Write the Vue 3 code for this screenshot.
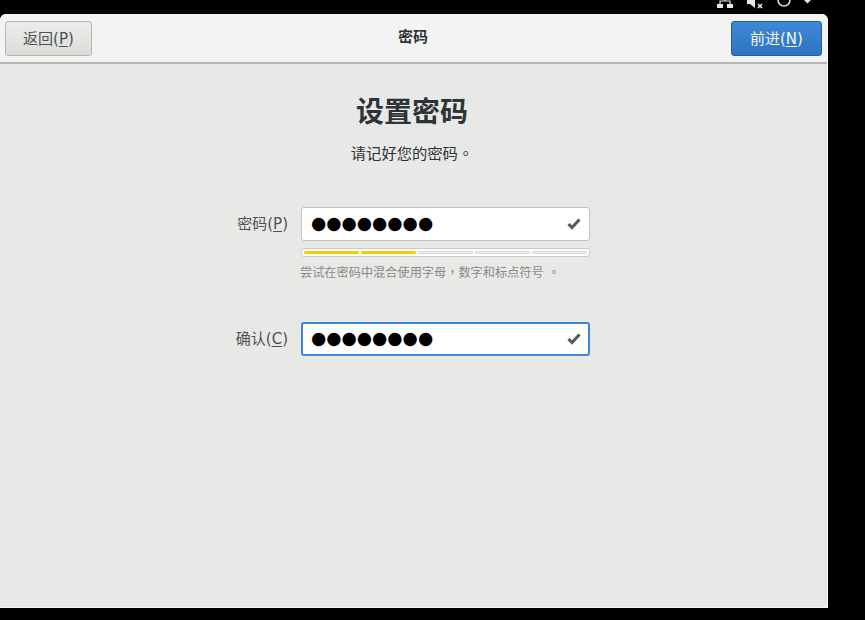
<script setup>
const segments = [
  { on: true }, { on: true }, { on: false }, { on: false }, { on: false }
]
const dots = '●●●●●●●●'
</script>

<template>
  <div class="screen">
    <div class="tray">
      <svg class="ti net" width="18" height="14" viewBox="0 0 18 14"><path d="M1 4h6v4H1zM11 4h6v4h-6z" fill="#e8e8e8"/><path d="M4 4V1h10v3M9 1v-2" fill="none" stroke="#e8e8e8" stroke-width="1.2"/></svg>
      <svg class="ti vol" width="18" height="14" viewBox="0 0 18 14"><path d="M0 -2h3l5-4v14l-5-4H0z" fill="#e8e8e8"/><path d="M11 4l4 4M15 4l-4 4" stroke="#e8e8e8" stroke-width="1.6"/></svg>
      <svg class="ti pow" width="16" height="14" viewBox="0 0 16 14"><circle cx="8" cy="0" r="6" fill="none" stroke="#e8e8e8" stroke-width="1.5"/></svg>
      <svg class="ti car" width="10" height="14" viewBox="0 0 10 14"><path d="M1 0h7L4.500 3.500z" fill="#e8e8e8"/></svg>
    </div>
    <div class="window">
      <header class="head">
        <button class="btn">返回(<u>P</u>)</button>
        <div class="head-title">密码</div>
        <button class="btn primary">前进(<u>N</u>)</button>
      </header>
      <main class="body">
        <h1 class="title">设置密码</h1>
        <p class="sub">请记好您的密码<span class="punct">。</span></p>
        <div class="form">
          <label class="lab">密码(<u>P</u>)</label>
          <div class="entry">
            <span class="dots">{{ dots }}</span>
            <svg class="check" width="14" height="12" viewBox="0 0 14 12"><path d="M1.500 6l3.500 3.500 7.500-8" fill="none" stroke="#555a5c" stroke-width="3"/></svg>
          </div>
          <div class="meter">
            <span v-for="(s, i) in segments" :key="i" class="seg" :class="{ on: s.on }"></span>
          </div>
          <div class="hint">尝试在密码中混合使用字母<span class="punct">，</span>数字和标点符号 <span class="punct">。</span></div>
          <label class="lab second">确认(<u>C</u>)</label>
          <div class="entry focus second">
            <span class="dots">{{ dots }}</span>
            <svg class="check" width="14" height="12" viewBox="0 0 14 12"><path d="M1.500 6l3.500 3.500 7.500-8" fill="none" stroke="#555a5c" stroke-width="3"/></svg>
          </div>
        </div>
      </main>
    </div>
  </div>
</template>

<style>
html, body { margin: 0; background: #000; }
</style>

<style scoped>
.screen {
  width: 865px;
  height: 620px;
  background: #000;
  overflow: hidden;
  font-family: "DejaVu Sans", "Noto Sans CJK SC", sans-serif;
  color: #2e3436;
}
.tray {
  height: 14px;
  display: flex;
  justify-content: flex-end;
  align-items: flex-start;
  padding-right: 52px;
}
.ti { display: block; height: 14px; flex: none; }
.net { margin-right: 13px; }
.vol { margin-right: 11px; }
.pow { margin-right: 11px; }
.window {
  width: 828px;
  height: 594px;
  border-radius: 6px 6px 0 0;
  background: #e8e8e7;
  border-bottom: 1px solid #f6f6f6;
  box-sizing: border-box;
  border-right: 1px solid #f6f6f6;
  overflow: hidden;
}
.head {
  height: 50px;
  box-sizing: border-box;
  background: #f3f3f3;
  border-bottom: 2px solid #b6b6b3;
  display: flex;
  align-items: flex-start;
  justify-content: space-between;
  padding: 7px 5px 0 5px;
}
.head-title {
  font-size: 15px;
  font-weight: 700;
  line-height: 22px;
  margin-top: 5px;
  color: #2e3436;
  margin-left: 3px;
}
.btn {
  width: 87px;
  height: 35px;
  box-sizing: border-box;
  border: 1px solid #b4b4b0;
  border-radius: 3px;
  background: linear-gradient(#ececea, #dcdcd9);
  font-family: inherit;
  font-size: 15px;
  color: #4c5254;
  padding: 2px 0 0;
  line-height: 1;
}
.btn.primary {
  width: 91px;
  border-color: #1f5fa6;
  background: linear-gradient(#3f88d6, #2e73c2);
  color: #f2f6fb;
}
.body {
  display: flex;
  flex-direction: column;
  align-items: center;
  padding-right: 3px;
}
.title {
  margin: 29px 0 0;
  font-size: 28px;
  font-weight: 700;
  line-height: 40px;
  color: #2e3436;
}
.sub {
  margin: 8px 0 0;
  font-size: 15.300px;
  line-height: 22px;
  color: #2e3436;
}
.punct { font-family: "Noto Sans CJK TC", sans-serif; }
.form {
  margin-top: 42px;
  margin-left: 2px;
  display: grid;
  grid-template-columns: 52px 289px;
  column-gap: 13px;
}
.lab {
  grid-column: 1;
  font-size: 15px;
  line-height: 34px;
  height: 34px;
  color: #4c5254;
  display: flex;
  justify-content: flex-end;
  white-space: pre;
}
.entry {
  grid-column: 2;
  height: 34px;
  box-sizing: border-box;
  background: #fff;
  border: 1px solid #c4c4c0;
  border-radius: 3px;
  display: flex;
  align-items: center;
  justify-content: space-between;
  padding: 0 8px 0 9px;
}
.entry.focus {
  border: 2px solid #3f87d8;
  padding: 0 7px 0 8px;
}
.dots {
  font-family: "DejaVu Sans", sans-serif;
  font-size: 17.500px;
  line-height: 30px;
  margin-top: -2px;
  color: #000;
  white-space: nowrap;
}
.check { display: block; flex: none; }
.meter {
  grid-column: 2;
  margin-top: 7px;
  height: 9px;
  box-sizing: border-box;
  border: 1px solid #c9c9c5;
  border-radius: 3px;
  background: #fff;
  display: flex;
  align-items: center;
  gap: 2px;
  padding: 0 2px;
}
.seg {
  flex: 1;
  height: 3px;
  box-sizing: border-box;
  background: #f3f3f3;
  border: 1px solid #d6d6d3;
  border-radius: 1px;
}
.seg.on {
  background: #f5ce00;
  border-color: #f5ce00;
}
.hint {
  grid-column: 2;
  margin-top: 5px;
  margin-left: -1px;
  font-size: 12.200px;
  line-height: 20px;
  color: #888a85;
  white-space: nowrap;
}
.second { margin-top: 39px; }
u { text-underline-offset: 2px; }
</style>
